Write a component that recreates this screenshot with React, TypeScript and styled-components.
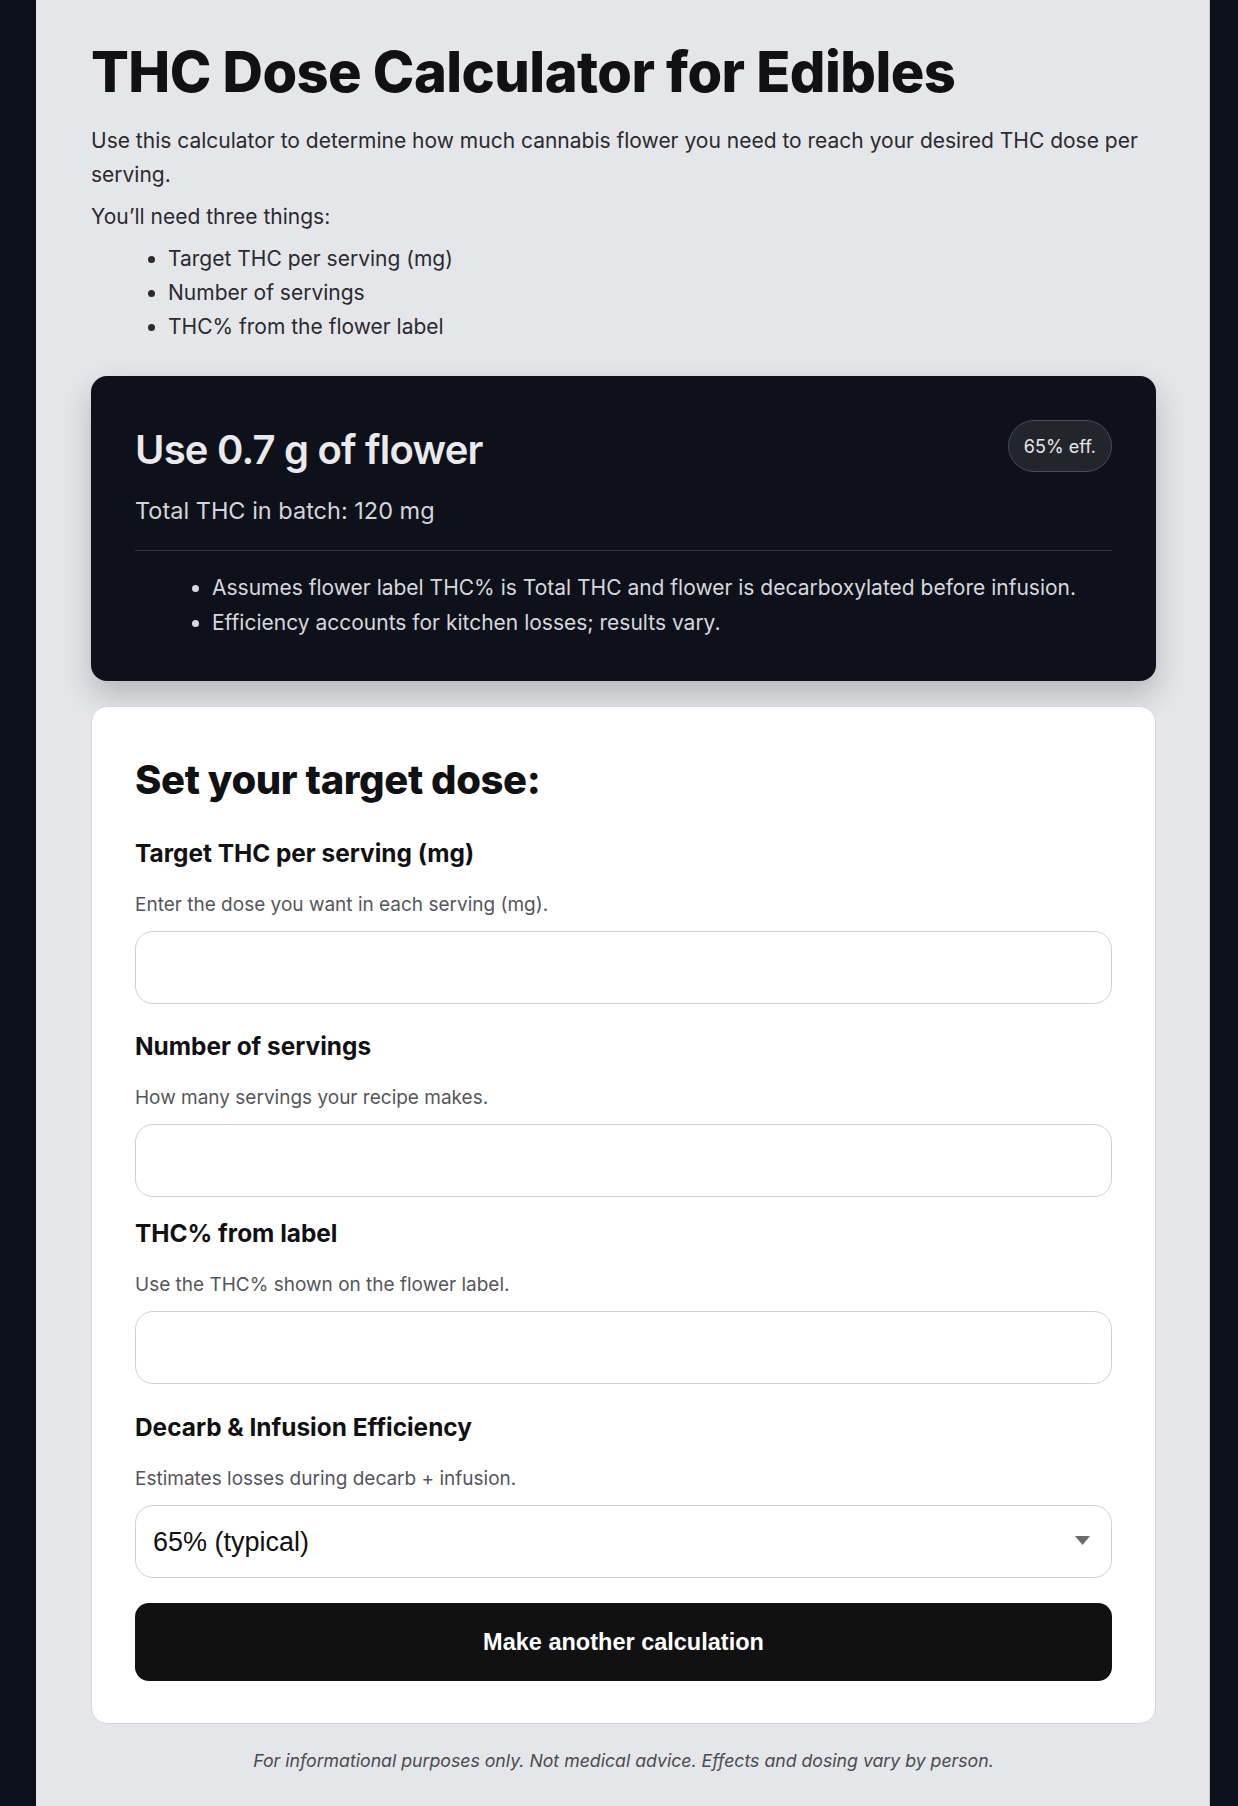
import { useState } from "react"
import styled, { createGlobalStyle } from "styled-components"

const GlobalStyle = createGlobalStyle`
  html, body {
    margin: 0;
    padding: 0;
    background: #0d111b;
  }
  body {
    font-family: Inter, "Noto Sans", sans-serif;
    -webkit-font-smoothing: antialiased;
  }
  * {
    box-sizing: border-box;
  }
`

const Page = styled.div`
  min-height: 100vh;
  padding-left: 36px;
`

const Sheet = styled.main`
  width: 1174px;
  min-height: 1806px;
  background: #e5e6ea;
  border-right: 1px solid #c9cad0;
  padding: 40px 53px 40px 55px;
`

const Title = styled.h1`
  margin: 0;
  font-size: 56px;
  line-height: 64px;
  font-weight: 800;
  letter-spacing: -0.01em;
  color: #111113;
`

const Intro = styled.p<{ $top?: number }>`
  margin: ${(p) => p.$top ?? 0}px 0 8px;
  font-size: 21px;
  line-height: 34px;
  color: #2a2a2f;
`

const Bullets = styled.ul<{ $dark?: boolean }>`
  margin: 0;
  padding-left: 77px;
  font-size: 21px;
  line-height: ${(p) => (p.$dark ? 35 : 34)}px;
  color: ${(p) => (p.$dark ? "#d7d8de" : "#2a2a2f")};
`

const ResultCard = styled.section`
  margin-top: 32px;
  background: #0e1119;
  border-radius: 16px;
  padding: 44px 44px 41px;
  box-shadow: 0 14px 30px rgba(14, 17, 25, 0.22);
  color: #e9e9ee;
`

const ResultHead = styled.div`
  display: flex;
  justify-content: space-between;
  align-items: flex-start;
`

const ResultTitle = styled.h2`
  margin: 0;
  font-size: 40px;
  line-height: 60px;
  font-weight: 600;
  letter-spacing: -0.02em;
`

const Badge = styled.span`
  display: inline-flex;
  align-items: center;
  height: 52px;
  padding: 0 15px;
  border-radius: 999px;
  background: #23252d;
  border: 1px solid #484b54;
  font-size: 18px;
  color: #e6e6ea;
`

const Total = styled.p`
  margin: 14px 0 0;
  font-size: 23.5px;
  line-height: 33px;
  color: #d4d5db;
`

const Divider = styled.hr`
  margin: 23px 0 19px;
  border: 0;
  border-top: 1px solid #30333c;
`

const FormCard = styled.section`
  margin-top: 25px;
  background: #ffffff;
  border: 1px solid #d6d6da;
  border-radius: 16px;
  padding: 43px 43px 42px;
`

const FormTitle = styled.h2`
  margin: 0;
  font-size: 40px;
  line-height: 60px;
  font-weight: 800;
  letter-spacing: -0.01em;
  color: #111113;
`

const Field = styled.div<{ $top: number }>`
  display: flex;
  flex-direction: column;
  margin-top: ${(p) => p.$top}px;
`

const Label = styled.label`
  font-size: 24.4px;
  line-height: 31px;
  font-weight: 700;
  color: #111113;
  margin-bottom: 22px;
`

const Help = styled.p`
  margin: 0 0 13px;
  font-size: 19px;
  line-height: 27px;
  color: #55565c;
`

const Input = styled.input`
  display: block;
  width: 100%;
  height: 73px;
  padding: 0 17px;
  border: 1px solid #d0d0d5;
  border-radius: 18px;
  background: #fff;
  font: 400 27px "Liberation Sans", Arial, sans-serif;
  color: #111;
  outline: none;
`

const SelectWrap = styled.div`
  position: relative;
`

const Select = styled.select`
  display: block;
  width: 100%;
  height: 73px;
  padding: 0 17px;
  border: 1px solid #d0d0d5;
  border-radius: 18px;
  background: #fff;
  appearance: none;
  font: 400 27px "Liberation Sans", Arial, sans-serif;
  color: #111;
  outline: none;
`

const Arrow = styled.svg`
  position: absolute;
  right: 22px;
  top: 31px;
  pointer-events: none;
`

const Button = styled.button`
  display: block;
  width: 100%;
  height: 78px;
  margin-top: 25px;
  border: 0;
  border-radius: 14px;
  background: #111111;
  color: #ffffff;
  font: 700 23.5px "Liberation Sans", Arial, sans-serif;
  cursor: pointer;
`

const Footer = styled.p`
  margin: 23px 0 0;
  text-align: center;
  font-style: italic;
  font-size: 17.7px;
  line-height: 27px;
  color: #4a4b51;
`

const fields = [
  { id: "dose", label: "Target THC per serving (mg)", help: "Enter the dose you want in each serving (mg).", top: 27.6 },
  { id: "servings", label: "Number of servings", help: "How many servings your recipe makes.", top: 27.6 },
  { id: "thc", label: "THC% from label", help: "Use the THC% shown on the flower label.", top: 20.6 },
]

export default function App() {
  const [values, setValues] = useState<Record<string, string>>({})
  const [efficiency, setEfficiency] = useState("65")

  return (
    <Page>
      <GlobalStyle />
      <Sheet>
        <Title>THC Dose Calculator for Edibles</Title>
        <Intro $top={20}>
          Use this calculator to determine how much cannabis flower you need to reach your desired THC dose per
          serving.
        </Intro>
        <Intro>You’ll need three things:</Intro>
        <Bullets>
          <li>Target THC per serving (mg)</li>
          <li>Number of servings</li>
          <li>THC% from the flower label</li>
        </Bullets>

        {/* Result */}
        <ResultCard>
          <ResultHead>
            <ResultTitle>Use 0.7 g of flower</ResultTitle>
            <Badge>{efficiency}% eff.</Badge>
          </ResultHead>
          <Total>Total THC in batch: 120 mg</Total>
          <Divider />
          <Bullets $dark>
            <li>Assumes flower label THC% is Total THC and flower is decarboxylated before infusion.</li>
            <li>Efficiency accounts for kitchen losses; results vary.</li>
          </Bullets>
        </ResultCard>

        {/* Form */}
        <FormCard>
          <FormTitle>Set your target dose:</FormTitle>
          {fields.map((f) => (
            <Field key={f.id} $top={f.top}>
              <Label htmlFor={f.id}>{f.label}</Label>
              <Help>{f.help}</Help>
              <Input
                id={f.id}
                inputMode="decimal"
                value={values[f.id] ?? ""}
                onChange={(e) => setValues({ ...values, [f.id]: e.target.value })}
              />
            </Field>
          ))}
          <Field $top={28.6}>
            <Label htmlFor="eff">Decarb &amp; Infusion Efficiency</Label>
            <Help>Estimates losses during decarb + infusion.</Help>
            <SelectWrap>
              <Select id="eff" value={efficiency} onChange={(e) => setEfficiency(e.target.value)}>
                <option value="50">50% (conservative)</option>
                <option value="65">65% (typical)</option>
                <option value="80">80% (optimistic)</option>
              </Select>
              <Arrow width="15" height="9" viewBox="0 0 15 9">
                <path d="M0 0H15L7.5 9Z" fill="#6b6b6e" />
              </Arrow>
            </SelectWrap>
          </Field>
          <Button type="button" onClick={() => setValues({})}>
            Make another calculation
          </Button>
        </FormCard>

        <Footer>For informational purposes only. Not medical advice. Effects and dosing vary by person.</Footer>
      </Sheet>
    </Page>
  )
}
